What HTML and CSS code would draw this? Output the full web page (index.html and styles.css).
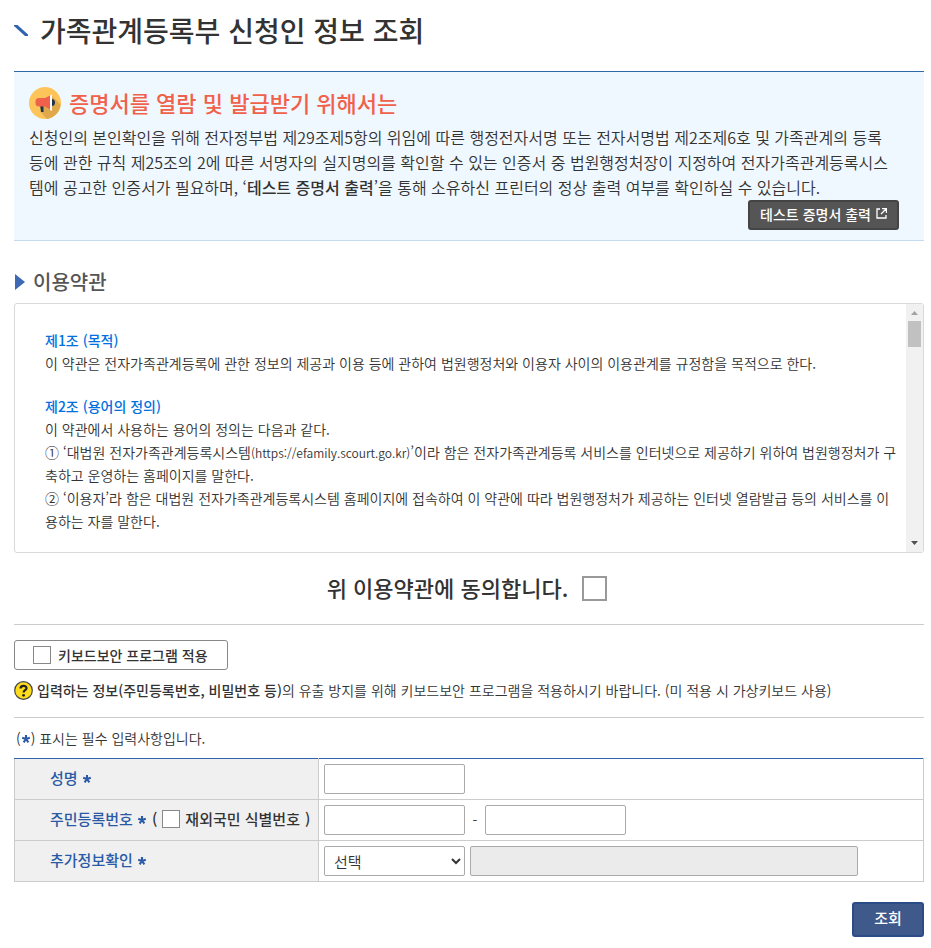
FILE: index.html
```html
<!DOCTYPE html>
<html lang="ko">
    <head>
        <meta charset="UTF-8" />
        <meta name="viewport" content="width=device-width, initial-scale=1.0" />
        <title>가족관계등록부 신청인 정보 조회</title>
        <link rel="stylesheet" href="styles.css">
    </head>
    <body>
        <svg class="defs" width="0" height="0" aria-hidden="true">
            <symbol id="star" viewBox="0 0 10 10">
                <path d="M5 5V1M5 5L1.2 3.8M5 5L8.8 3.8M5 5L2.6 8.3M5 5L7.4 8.3" stroke="currentColor" stroke-width="2.1" fill="none" />
            </symbol>
        </svg>

        <main class="page">
            <h1 class="page-title">
                <svg class="title-mark" viewBox="0 0 14 12" aria-hidden="true">
                    <path d="M0 1h3.5L14 10.5V12h-3L0 2z" fill="#2f62ae" />
                </svg>
                가족관계등록부 신청인 정보 조회
            </h1>

            <!-- 안내 -->
            <section class="guide">
                <h2 class="guide-title">
                    <svg class="guide-icon" viewBox="0 0 32 32" aria-hidden="true">
                        <circle cx="16" cy="16" r="16" fill="#fdc459" />
                        <path d="M23 9L31.5 17.5A16 16 0 0 1 18 31.9L11.5 25L14 20z" fill="#dfa94b" />
                        <path d="M11 18h3.5v7H12z" fill="#1f3349" />
                        <path d="M22.5 12a3.5 3.5 0 0 1 0 7z" fill="#1f3349" />
                        <path d="M10 11h6L22 8v15L16 19.5h-6a3.5 3.5 0 0 1-3.5-3.5v-1.5A3.5 3.5 0 0 1 10 11z" fill="#f0614b" />
                        <path d="M21 8.5L23 7.5v16.5L21 23z" fill="#fff" />
                    </svg>
                    <span>증명서를 열람 및 발급받기 위해서는</span>
                </h2>
                <p class="guide-text">신청인의 본인확인을 위해 전자정부법 제29조제5항의 위임에 따른 행정전자서명 또는 전자서명법 제2조제6호 및 가족관계의 등록 등에 관한 규칙 제25조의 2에 따른 서명자의 실지명의를 확인할 수 있는 인증서 중 법원행정처장이 지정하여 전자가족관계등록시스템에 공고한 인증서가 필요하며, ‘<strong>테스트 증명서 출력</strong>’을 통해 소유하신 프린터의 정상 출력 여부를 확인하실 수 있습니다.</p>
                <button type="button" class="btn-test">
                    테스트 증명서 출력
                    <svg class="btn-icon" viewBox="0 0 11 11" aria-hidden="true">
                        <path d="M4 1H1v9h9V7M6 .5h4.5V5M10 1L5 6" fill="none" stroke="#fff" stroke-width="1.3" />
                    </svg>
                </button>
            </section>

            <!-- 이용약관 -->
            <h2 class="section-title">
                <svg class="section-mark" viewBox="0 0 11 16" aria-hidden="true"><path d="M1 0l10 8-10 8z" fill="#3e69b4" /></svg>
                이용약관
            </h2>
            <div class="terms">
                <div class="terms-body" tabindex="0">
                    <h3>제1조 (목적)</h3>
                    <p>이 약관은 전자가족관계등록에 관한 정보의 제공과 이용 등에 관하여 법원행정처와 이용자 사이의 이용관계를 규정함을 목적으로 한다.</p>
                    <h3>제2조 (용어의 정의)</h3>
                    <p>이 약관에서 사용하는 용어의 정의는 다음과 같다.</p>
                    <p>① ‘대법원 전자가족관계등록시스템<span class="url">(https://efamily.scourt.go.kr)</span>’이라 함은 전자가족관계등록 서비스를 인터넷으로 제공하기 위하여 법원행정처가 구축하고 운영하는 홈페이지를 말한다.</p>
                    <p>② ‘이용자’라 함은 대법원 전자가족관계등록시스템 홈페이지에 접속하여 이 약관에 따라 법원행정처가 제공하는 인터넷 열람발급 등의 서비스를 이용하는 자를 말한다.</p>
                </div>
                <div class="scrollbar" aria-hidden="true">
                    <svg class="arrow arrow-up" viewBox="0 0 7 4"><path d="M0 4l3.5-4L7 4z" /></svg>
                    <div class="thumb"></div>
                    <svg class="arrow arrow-down" viewBox="0 0 7 4"><path d="M0 0l3.5 4L7 0z" /></svg>
                </div>
            </div>

            <div class="agree">
                <label for="agree">위 이용약관에 동의합니다.</label>
                <input type="checkbox" id="agree" class="check check-large">
            </div>

            <!-- 키보드보안 -->
            <div class="security">
                <label class="security-box">
                    <input type="checkbox" class="check">
                    키보드보안 프로그램 적용
                </label>
                <p class="security-text">
                    <svg class="help-icon" viewBox="0 0 19 19" aria-hidden="true">
                        <circle cx="9.5" cy="9.5" r="8.8" fill="#fddb1d" stroke="#444" stroke-width="1.2" />
                        <path d="M6.5 7.5C6.5 3.8 12.6 4 12.5 7.3C12.4 9.3 9.6 9.2 9.6 11.6" fill="none" stroke="#222" stroke-width="2.2" />
                        <circle cx="9.6" cy="14.3" r="1.4" fill="#222" />
                    </svg>
                    <span><strong>입력하는 정보(주민등록번호, 비밀번호 등)</strong>의 유출 방지를 위해 키보드보안 프로그램을 적용하시기 바랍니다. (미 적용 시 가상키보드 사용)</span>
                </p>
            </div>

            <!-- 신청인 정보 -->
            <form>
                <p class="required-note">(<svg class="star"><use href="#star" /></svg>) 표시는 필수 입력사항입니다.</p>
                <table class="form-table">
                    <tr>
                        <th scope="row"><label for="name">성명 <svg class="star"><use href="#star" /></svg></label></th>
                        <td><input type="text" id="name" class="field"></td>
                    </tr>
                    <tr>
                        <th scope="row">
                            <div class="cell">
                                <label for="rrn1">주민등록번호 <svg class="star"><use href="#star" /></svg></label>
                                <span class="overseas">( <label><input type="checkbox" class="check">재외국민 식별번호</label>)</span>
                            </div>
                        </th>
                        <td>
                            <div class="cell">
                                <input type="text" id="rrn1" class="field">
                                <span class="dash">-</span>
                                <input type="password" class="field" aria-label="주민등록번호 뒷자리">
                            </div>
                        </td>
                    </tr>
                    <tr>
                        <th scope="row"><label for="extra">추가정보확인 <svg class="star"><use href="#star" /></svg></label></th>
                        <td>
                            <div class="cell">
                                <select id="extra" class="field">
                                    <option>선택</option>
                                </select>
                                <input type="text" class="field field-wide" aria-label="추가정보" disabled>
                            </div>
                        </td>
                    </tr>
                </table>
                <div class="actions">
                    <button type="submit" class="btn-search">조회</button>
                </div>
            </form>
        </main>
    </body>
</html>
```

FILE: styles.css
```css
* {
    box-sizing: border-box;
}
body {
    margin: 0;
    font-family: "Noto Sans CJK KR", "Noto Sans KR", sans-serif;
    font-size: 14px;
    font-weight: 350;
    line-height: 23px;
    color: #333;
    background-color: #fff;
}
h1, h2, h3, p {
    margin: 0;
}
strong {
    font-weight: 500;
}
button, input, select {
    font-family: inherit;
}
.defs {
    display: block;
}
.page {
    padding: 10px 7px 10px 14px;
}
.page-title {
    display: flex;
    align-items: center;
    gap: 12px;
    height: 61px;
    padding-bottom: 22px;
    font-size: 28px;
    font-weight: 500;
    line-height: 40px;
}
.title-mark {
    width: 14px;
    height: 12px;
}

/* guide box */
.guide {
    display: flex;
    flex-direction: column;
    padding: 15px 15px 10px;
    border-top: 1px solid #2d69a8;
    border-bottom: 1px solid #c4daf0;
    background-color: #f0f8ff;
}
.guide-title {
    display: flex;
    align-items: center;
    gap: 8px;
    padding-bottom: 6px;
    font-size: 22px;
    font-weight: 500;
    line-height: 28px;
    color: #f0614b;
}
.guide-title span {
    padding-bottom: 3px;
}
.guide-icon {
    width: 32px;
    height: 32px;
}
.guide-text {
    padding-right: 12px;
    font-size: 16px;
    line-height: 25px;
    word-break: break-all;
}
.btn-test {
    display: flex;
    align-items: center;
    align-self: flex-end;
    gap: 5px;
    height: 30px;
    margin-right: 10px;
    padding: 0 10px 3px;
    border: 2px solid #444;
    border-radius: 3px;
    background-color: #555;
    color: #fff;
    font-size: 14px;
    font-weight: 500;
    cursor: pointer;
}
.btn-icon {
    width: 11px;
    height: 11px;
}

/* terms */
.section-title {
    display: flex;
    align-items: center;
    gap: 8px;
    padding: 26px 0 6px;
    font-size: 20px;
    font-weight: 500;
    line-height: 30px;
    color: #555;
}
.section-mark {
    width: 11px;
    height: 16px;
}
.terms {
    display: flex;
    height: 250px;
    border: 1px solid #d9d9d9;
    border-radius: 3px;
}
.terms-body {
    flex: 1;
    padding: 25px 8px 0 30px;
    overflow-y: auto;
    word-break: break-all;
}
.terms h3 {
    font-size: 14px;
    font-weight: 500;
    color: #0070e0;
}
.terms p + h3 {
    margin-top: 20px;
}
.url {
    font-size: 12px;
}
.scrollbar {
    display: flex;
    flex-direction: column;
    align-items: center;
    width: 17px;
    padding: 7px 0;
    background-color: #f1f1f1;
}
.arrow {
    width: 7px;
    height: 4px;
}
.arrow-up {
    fill: #a3a3a3;
}
.arrow-down {
    margin-top: auto;
    fill: #505050;
}
.thumb {
    width: 13px;
    height: 26px;
    margin-top: 6px;
    background-color: #c1c1c1;
}

/* checkboxes */
.check {
    appearance: none;
    flex: none;
    width: 18px;
    height: 18px;
    margin: 0;
    border: 1px solid #888;
    background-color: #fff;
}
.check:checked {
    background-color: #3e69b4;
}
.check-large {
    width: 25px;
    height: 25px;
    border: 2px solid #999;
}
.agree {
    display: flex;
    justify-content: center;
    align-items: center;
    gap: 14px;
    height: 72px;
    padding-right: 4px;
    border-bottom: 1px solid #ccc;
    font-size: 22px;
    font-weight: 500;
}
.agree label {
    padding-bottom: 2px;
}

/* keyboard security */
.security {
    padding: 15px 0;
    border-bottom: 1px solid #ccc;
}
.security-box {
    display: inline-flex;
    align-items: center;
    gap: 7px;
    height: 30px;
    padding: 0 19px 0 18px;
    border: 1px solid #888;
    border-radius: 3px;
    font-weight: 500;
    vertical-align: top;
}
.security-text {
    display: flex;
    align-items: center;
    gap: 4px;
    margin-top: 9px;
}
.help-icon {
    flex: none;
    width: 19px;
    height: 19px;
}

/* form */
.star {
    width: 10px;
    height: 10px;
    color: #2a5aa5;
}
.required-note {
    padding: 9px 2px 8px;
}
.form-table {
    width: 100%;
    border-collapse: collapse;
}
.form-table th,
.form-table td {
    height: 41px;
    border: 1px solid #ccc;
}
.form-table tr:first-child th,
.form-table tr:first-child td {
    border-top-color: #2f62ae;
}
.form-table th {
    width: 304px;
    padding: 0 0 3px 35px;
    background-color: #f0f0f0;
    color: #2a5aa5;
    font-size: 15px;
    font-weight: 500;
    text-align: left;
    white-space: nowrap;
}
.form-table td {
    padding: 0 5px;
}
.cell {
    display: flex;
    align-items: center;
    gap: 5px;
}
.overseas,
.overseas label {
    display: flex;
    align-items: center;
    gap: 5px;
    color: #333;
}
.field {
    display: block;
    width: 141px;
    height: 30px;
    padding: 0 5px;
    border: 1px solid #aaa;
    border-radius: 2px;
    background-color: #fff;
    color: #333;
    font-size: 15px;
    font-weight: 350;
}
.field:disabled {
    background-color: #ebebeb;
}
.field-wide {
    width: 388px;
}
.dash {
    width: 10px;
    text-align: center;
}
.actions {
    display: flex;
    justify-content: flex-end;
    padding-top: 20px;
}
.btn-search {
    width: 72px;
    height: 35px;
    padding: 0 0 5px;
    border: 2px solid #2c4c87;
    border-radius: 3px;
    background-color: #40598b;
    color: #fff;
    font-size: 15px;
    font-weight: 500;
    cursor: pointer;
}
```
